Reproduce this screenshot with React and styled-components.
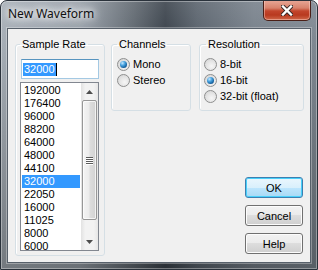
import React from "react";
import styled, { createGlobalStyle } from "styled-components";

const GlobalStyle = createGlobalStyle`
  html, body {
    margin: 0;
    padding: 0;
    background: #ffffff;
  }
  body {
    font-family: "Liberation Sans", Arial, sans-serif;
    font-size: 11px;
    color: #000;
  }
`;

const rates = [
  "192000", "176400", "96000", "88200", "64000", "48000", "44100",
  "32000", "22050", "16000", "11025", "8000", "6000",
];

const Window = styled.div`
  box-sizing: border-box;
  width: 318px;
  height: 270px;
  display: flex;
  flex-direction: column;
  padding: 0 6px 6px;
  border: 1px solid #2a323b;
  border-radius: 7px 7px 0 0;
  overflow: hidden;
  background:
    linear-gradient(180deg, rgba(255, 255, 255, 0.1) 0%, rgba(0, 0, 0, 0) 15%, rgba(0, 0, 0, 0.3) 100%),
    linear-gradient(90deg, #a6aeb6 0%, #98a0a9 25%, #606870 42%, #3b434c 52%, #5a636d 62%, #78818b 80%, #7f8892 100%);
  box-shadow: inset 0 0 0 1px rgba(255, 255, 255, 0.35);
`;

const TitleBar = styled.div`
  height: 27px;
  display: flex;
  justify-content: space-between;
  align-items: flex-start;
  flex-shrink: 0;
`;

const Title = styled.div`
  margin: 5px 0 0 1px;
  font-family: "Noto Sans", "Open Sans", sans-serif;
  font-size: 12px;
  line-height: 16px;
  color: #101010;
  text-shadow: 0 0 6px #fff, 0 0 10px #fff, 0 0 14px rgba(255, 255, 255, 0.9);
`;

const CloseButton = styled.div`
  box-sizing: border-box;
  width: 48px;
  height: 21px;
  margin-top: -1px;
  display: flex;
  align-items: center;
  justify-content: center;
  border: 1px solid #4a1f17;
  border-top: none;
  border-radius: 0 0 5px 5px;
  background: linear-gradient(180deg, #e9a999 0%, #d8826c 40%, #c2452c 55%, #b8391f 75%, #d0684a 100%);
  box-shadow: inset 0 0 0 1px rgba(255, 220, 210, 0.45);
`;

const Client = styled.div`
  flex: 1;
  display: flex;
  gap: 6px;
  padding: 9px 6px 6px 7px;
  border: 1px solid #57606a;
  background: #f0f0f0;
  box-shadow: 0 0 0 1px rgba(255, 255, 255, 0.3);
`;

const Group = styled.fieldset`
  box-sizing: border-box;
  margin: 0;
  min-width: 0;
  width: ${(p) => p.$w}px;
  height: ${(p) => p.$h}px;
  padding: ${(p) => p.$pt}px 0 0 ${(p) => p.$pl}px;
  border: 1px solid #d5dfe5;
  border-radius: 3px;
  box-shadow: inset 1px 1px 0 #ffffff;
`;

const Legend = styled.legend`
  padding: 0 2px;
  margin-left: ${(p) => p.$ml || 0}px;
  line-height: 13px;
  font-size: 11px;
`;

const TextBox = styled.div`
  box-sizing: border-box;
  width: 78px;
  height: 20px;
  margin-left: 1px;
  display: flex;
  align-items: center;
  padding: 0 1px;
  border: 1px solid #a4c9e3;
  border-top-color: #5794bf;
  background: #fff;
`;

const Selected = styled.span`
  background: #3399ff;
  color: #fff;
  line-height: 13px;
  padding: 0 1px;
`;

const Caret = styled.span`
  width: 1px;
  height: 13px;
  background: #000;
`;

const ListBox = styled.div`
  box-sizing: border-box;
  width: 79px;
  height: 169px;
  margin-top: 3px;
  display: flex;
  border: 1px solid #828790;
  background: #fff;
  overflow: hidden;
`;

const Items = styled.div`
  flex: 1;
  padding: 1px 1px 0;
  overflow: hidden;
`;

const Item = styled.div`
  height: 13px;
  line-height: 13px;
  padding-left: 2px;
  background: ${(p) => (p.$sel ? "#3399ff" : "transparent")};
  color: ${(p) => (p.$sel ? "#fff" : "#000")};
`;

const ScrollBar = styled.div`
  width: 17px;
  display: flex;
  flex-direction: column;
  background: linear-gradient(90deg, #e2e2e2 0%, #f2f2f2 25%, #f2f2f2 75%, #e6e6e6 100%);
`;

const ArrowBox = styled.div`
  height: 17px;
  display: flex;
  align-items: center;
  justify-content: center;
  flex-shrink: 0;
`;

const Thumb = styled.div`
  box-sizing: border-box;
  height: 120px;
  margin: 0 1px;
  display: flex;
  flex-direction: column;
  align-items: center;
  justify-content: center;
  gap: 1px;
  border: 1px solid #979797;
  border-radius: 2px;
  background: linear-gradient(90deg, #f4f4f4 0%, #ececec 45%, #dcdcdc 55%, #d2d2d2 100%);
  box-shadow: inset 0 0 0 1px rgba(255, 255, 255, 0.7);
`;

const Grip = styled.div`
  width: 7px;
  height: 1px;
  background: #5a5a5a;
  box-shadow: 0 1px 0 #ffffff;
`;

const Spacer = styled.div`
  flex: 1;
`;

const RightArea = styled.div`
  flex: 1;
  display: flex;
  flex-direction: column;
`;

const GroupRow = styled.div`
  display: flex;
  gap: 8px;
`;

const RadioRow = styled.div`
  display: flex;
  align-items: center;
  gap: 3px;
  height: 16px;
  line-height: 13px;
`;

const RadioCircle = styled.span`
  box-sizing: border-box;
  position: relative;
  width: 13px;
  height: 13px;
  flex-shrink: 0;
  border-radius: 50%;
  border: 1px solid #8e8f8f;
  background: radial-gradient(circle at 60% 65%, #f6f6f6 0%, #e6e6e6 45%, #cfcfcf 100%);

  &::after {
    content: "";
    display: ${(p) => (p.$on ? "block" : "none")};
    position: absolute;
    left: 2px;
    top: 2px;
    width: 7px;
    height: 7px;
    border-radius: 50%;
    background: radial-gradient(circle at 35% 30%, #c6e8ff 0%, #4aa4e0 35%, #15619f 70%, #0a3b6b 100%);
  }
`;

const ButtonStack = styled.div`
  margin: auto 1px 2px 0;
  align-self: flex-end;
  display: flex;
  flex-direction: column;
  gap: 7px;
`;

const Button = styled.div`
  box-sizing: border-box;
  width: 58px;
  height: 21px;
  display: flex;
  align-items: center;
  justify-content: center;
  border: 1px solid ${(p) => (p.$default ? "#3c7fb1" : "#707070")};
  border-radius: 3px;
  background: ${(p) =>
    p.$default
      ? "linear-gradient(180deg, #eaf6fd 0%, #d9f0fc 50%, #bee6fd 50%, #a7d9f5 100%)"
      : "linear-gradient(180deg, #f2f2f2 0%, #ebebeb 50%, #dddddd 50%, #cfcfcf 100%)"};
  box-shadow: inset 0 0 0 1px ${(p) => (p.$default ? "#48d0fa" : "#fcfcfc")};
  opacity: 1;
`;

const Arrow = ({ up }) => (
  <svg width="7" height="4" viewBox="0 0 7 4">
    <path d={up ? "M3.5 0 L7 4 L0 4 Z" : "M0 0 L7 0 L3.5 4 Z"} fill="#4d4d4d" />
  </svg>
);

const Radio = ({ on, children }) => (
  <RadioRow>
    <RadioCircle $on={on} />
    <span>{children}</span>
  </RadioRow>
);

export default function App() {
  return (
    <>
      <GlobalStyle />
      <Window>
        <TitleBar>
          <Title>New Waveform</Title>
          <CloseButton>
            <svg width="12" height="11" viewBox="0 0 12 11">
              <path d="M2 1.5 L10 9.5 M10 1.5 L2 9.5" stroke="#3a2a28" strokeWidth="4.2" strokeLinecap="square" />
              <path d="M2 1.5 L10 9.5 M10 1.5 L2 9.5" stroke="#ffffff" strokeWidth="2.4" strokeLinecap="square" />
            </svg>
          </CloseButton>
        </TitleBar>
        <Client>
          <Group $w={90} $h={218} $pt={8} $pl={4}>
            <Legend>Sample Rate</Legend>
            <TextBox>
              <Selected>32000</Selected>
              <Caret />
            </TextBox>
            <ListBox>
              <Items>
                {rates.map((r) => (
                  <Item key={r} $sel={r === "32000"}>
                    {r}
                  </Item>
                ))}
              </Items>
              <ScrollBar>
                <ArrowBox>
                  <Arrow up />
                </ArrowBox>
                <Thumb>
                  <Grip />
                  <Grip />
                  <Grip />
                  <Grip />
                </Thumb>
                <Spacer />
                <ArrowBox>
                  <Arrow />
                </ArrowBox>
              </ScrollBar>
            </ListBox>
          </Group>
          <RightArea>
            <GroupRow>
              <Group $w={80} $h={73} $pt={5} $pl={5}>
                <Legend>Channels</Legend>
                <Radio on>Mono</Radio>
                <Radio>Stereo</Radio>
              </Group>
              <Group $w={105} $h={73} $pt={5} $pl={4}>
                <Legend $ml={2}>Resolution</Legend>
                <Radio>8-bit</Radio>
                <Radio on>16-bit</Radio>
                <Radio>32-bit (float)</Radio>
              </Group>
            </GroupRow>
            <ButtonStack>
              <Button $default>OK</Button>
              <Button>Cancel</Button>
              <Button>Help</Button>
            </ButtonStack>
          </RightArea>
        </Client>
      </Window>
    </>
  );
}
